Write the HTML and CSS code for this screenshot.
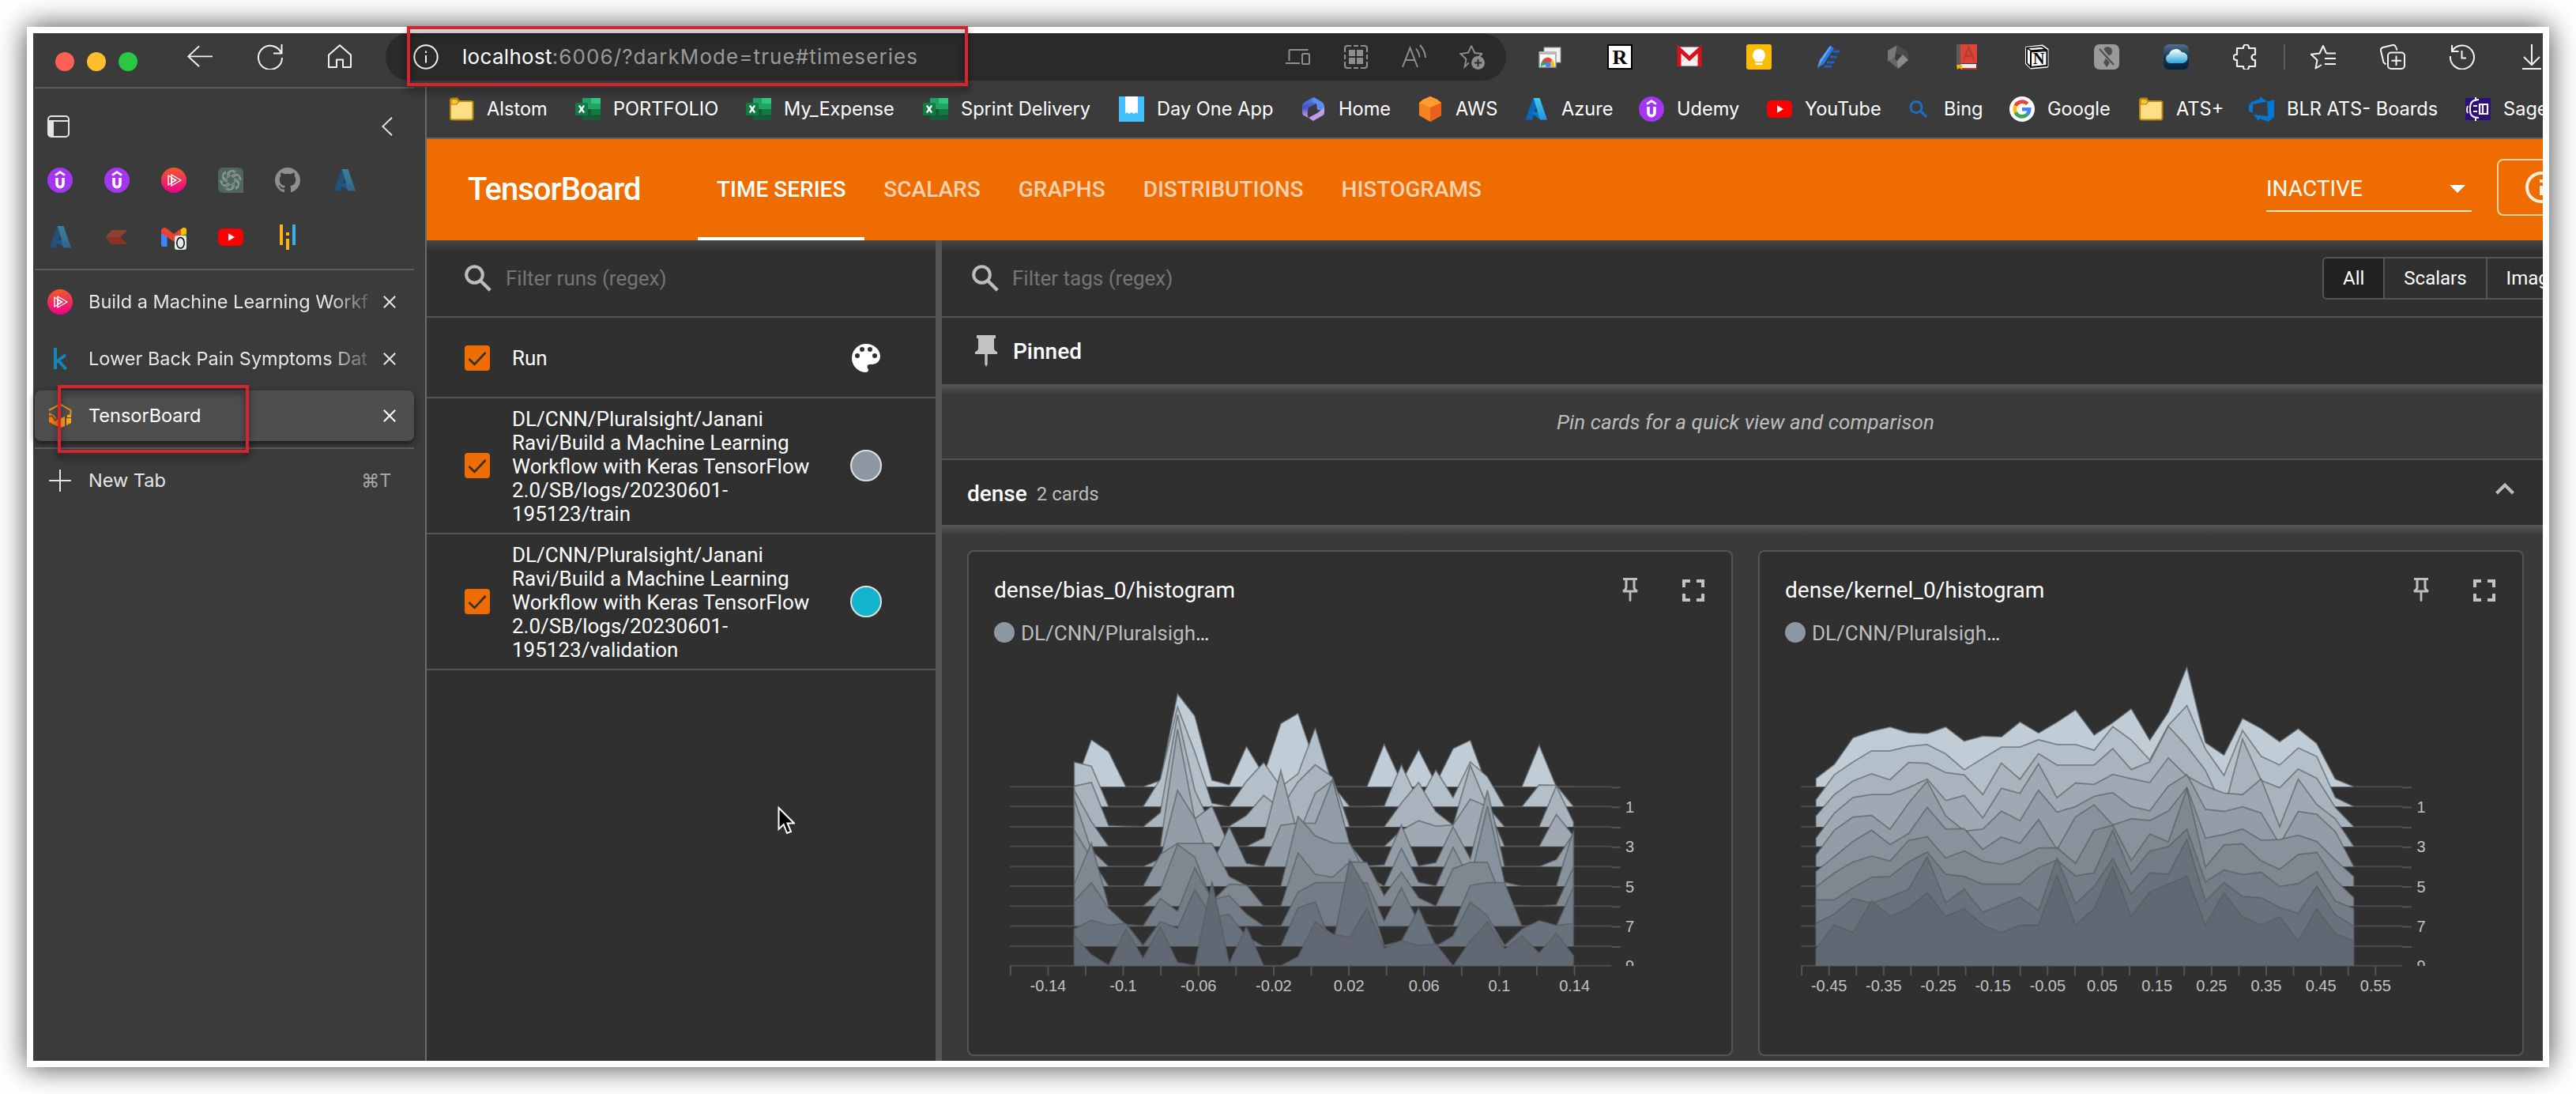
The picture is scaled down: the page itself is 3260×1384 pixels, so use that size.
FILE: index.html
```html
<!DOCTYPE html>
<html lang="en">
<head>
<meta charset="utf-8">
<title>TensorBoard</title>
<link rel="stylesheet" href="styles.css">
</head>
<body>
<svg class="defs" width="0" height="0" aria-hidden="true">
  <defs>
    <linearGradient id="ps" x1="0" y1="0" x2="0" y2="1"><stop offset="0" stop-color="#f15b2a"/><stop offset="1" stop-color="#ec008c"/></linearGradient>
    <linearGradient id="azL" x1="0" y1="0" x2="0" y2="1"><stop offset="0" stop-color="#1562ab"/><stop offset="1" stop-color="#0669bc"/></linearGradient>
    <linearGradient id="azR" x1="0" y1="0" x2="0" y2="1"><stop offset="0" stop-color="#3ccbf4"/><stop offset="1" stop-color="#2892df"/></linearGradient>
    <linearGradient id="cloud" x1="0" y1="0" x2="0" y2="1"><stop offset="0" stop-color="#fff"/><stop offset="1" stop-color="#2aa6dc"/></linearGradient>
    <linearGradient id="cloudbg" x1="0" y1="0" x2="0" y2="1"><stop offset="0" stop-color="#4f6f8d"/><stop offset=".5" stop-color="#17364f"/><stop offset="1" stop-color="#06203f"/></linearGradient>
    <linearGradient id="m365" x1="0" y1="0" x2="0" y2="1"><stop offset="0" stop-color="#3f8fe8"/><stop offset=".5" stop-color="#4a4fc4"/><stop offset="1" stop-color="#d3a6ee"/></linearGradient>
  </defs>
  <symbol id="udemy" viewBox="0 0 32 32"><circle cx="16" cy="16" r="16" fill="#a435f0"/><path d="M10 9.6 16 5.6l6 4" fill="none" stroke="#fff" stroke-width="2.6"/><path d="M12 13v7.5a4 4.2 0 0 0 8 0V13" fill="none" stroke="#fff" stroke-width="3.6"/></symbol>
  <symbol id="pluralsight" viewBox="0 0 32 32"><circle cx="16" cy="16" r="16" fill="url(#ps)"/><g fill="none" stroke="#fff" stroke-width="1.4" stroke-linejoin="round"><path d="M13 9 25 16 13 23z"/><path d="M9 10v12l10-6z"/><path d="M13 13v6l5-3z"/></g></symbol>
  <symbol id="azure" viewBox="0 0 32 32"><path d="M12 2h8L11 29.5H2.500z" fill="url(#azL)"/><path d="M8 19.500h13.500v10z" fill="#0078d4"/><path d="M12.800 2H20.500L30 29.500H20.800z" fill="url(#azR)"/></symbol>
  <symbol id="youtube" viewBox="0 0 32 32"><rect y="5" width="32" height="22" rx="6" fill="#f00"/><path d="M13 11.200v9.600l8-4.800z" fill="#fff"/></symbol>
  <symbol id="folder" viewBox="0 0 32 32"><path d="M2 5q0-2.500 2.500-2.500h6L13 6h15.500q2 0 2 2.200V27q0 2.500-2.500 2.500H4.500Q2 29.500 2 27z" fill="#ffdf85" stroke="#b8860b" stroke-width="2"/><path d="M3 4.500q0-1 1.500-1h5.500L12.500 6.500 10 10H3z" fill="#f7c52f" stroke="#b8860b" stroke-width="1.200"/></symbol>
  <symbol id="excel" viewBox="0 0 32 32"><path d="M9 2h23v28H9z" fill="#21a366"/><path d="M20 2h12v7H20z" fill="#33c481"/><path d="M9 16h23v7H9z" fill="#107c41"/><path d="M9 23h23v7H9z" fill="#185c37"/><path d="M9 16h11v7H9z" fill="#185c37"/><rect y="8" width="16" height="16" rx="1.500" fill="#107c41"/><path d="m4.800 11.500 6.400 9m0-9-6.400 9" stroke="#fff" stroke-width="2.200"/></symbol>
  <symbol id="close" viewBox="0 0 16 16"><path d="m.8.8 14.400 14.400M15.200.8.800 15.200" fill="none" stroke="currentColor" stroke-width="2"/></symbol>
  <symbol id="search" viewBox="0 0 34 34"><circle cx="12.500" cy="12.500" r="10.300" fill="none" stroke="#bdbdbd" stroke-width="4"/><path d="m20 20 12.300 12.300" stroke="#bdbdbd" stroke-width="4.300"/></symbol>
  <symbol id="pin" viewBox="0 0 24 32"><path d="M3 1.500h18M7 2v10q0 3-4 5h18q-4-2-4-5V2" fill="none" stroke="#bdbdbd" stroke-width="3"/><path d="M12 18v10.500" stroke="#bdbdbd" stroke-width="2.800" stroke-linecap="round"/></symbol>
  <symbol id="fullscreen" viewBox="0 0 28 28"><path d="M2 10V2h8M18 2h8v8M26 18v8h-8M10 26H2v-8" fill="none" stroke="#c2c2c2" stroke-width="4"/></symbol>
  <symbol id="check" viewBox="0 0 32 32"><rect width="32" height="32" rx="4" fill="#ef6c00"/><path d="m5.500 17 7 7L26.500 9" fill="none" stroke="#303030" stroke-width="2.600"/></symbol>
</svg>

<div class="window">
  <header class="toolbar">
    <div class="lights"><i class="red"></i><i class="yellow"></i><i class="green"></i></div>
    <div class="nav">
      <svg viewBox="0 0 32 32"><path d="M32 16H1.500M15 1.500 1.200 16 15 30" transform="translate(0 1) scale(1 .9)"/></svg>
      <svg viewBox="0 0 32 32"><path d="M30 11.500A15 15 0 1 0 31 17M30.500 0v11.500H20"/></svg>
      <svg viewBox="0 0 32 32"><path d="M2 13.500 16 1.200l14 12.300V29H20V19.500h-8V29H2z" stroke-linejoin="round"/></svg>
    </div>
    <div class="omnibox">
      <svg class="info" viewBox="0 0 32 32"><circle cx="16" cy="16" r="14.700"/><path d="M16 14v9.500M16 8.500v2.500"/></svg>
      <span class="url"><b>localhost</b>:6006/?darkMode=true#timeseries</span>
      <div class="omni-actions">
        <svg viewBox="0 0 32 32"><path d="M4.500 21V8.500Q4.500 7 6 7h22.500M0 24h18"/><rect x="21" y="12" width="9" height="13" rx="1.500"/></svg>
        <svg viewBox="0 0 32 32"><path d="M2 10V5q0-3 3-3h5M22 2h5q3 0 3 3v5M30 22v5q0 3-3 3h-5M10 30H5q-3 0-3-3v-5M2 13v6M30 13v6M13 2h6M13 30h6"/><path class="solid" d="M7 7h8v8H7zM17 7h8v8h-8zM7 17h8v8H7zM17 17h8v8h-8z"/></svg>
        <svg viewBox="0 0 32 32"><path d="M1 29 10.500 4.500 20 29M4.500 20h12M18 5.500q4 5 4.500 11M23 1q6.500 7 7 16"/></svg>
        <svg class="star" viewBox="0 0 34 34"><path d="M16 2l4.500 9.700 10.500 1M12.500 25 7 30.500 9 20 1.500 12.700l10.300-1.300L16 2M30 13l-4 4"/><circle class="solid" cx="25" cy="25" r="9"/><path class="plus" d="M25 20v10M20 25h10"/></svg>
      </div>
    </div>
    <div class="extensions">
      <svg viewBox="0 0 32 32"><rect x="8" y="4" width="21" height="19" fill="#f1f1f1" stroke="#9a9a9a"/><rect x="2" y="10" width="21" height="19" fill="#fff" stroke="#9a9a9a" stroke-width="1.500"/><rect x="2" y="9" width="21" height="4" fill="#bbb"/><path d="M4 28a8.500 9.500 0 0 1 4-9l5 6z" fill="#34a853"/><path d="M6 20q7-7 13 0l-3 4H9z" fill="#ea4335"/><path d="M18 19q4 4 3 9h-7z" fill="#fbbc05"/><circle cx="13" cy="25.500" r="3.600" fill="#4285f4"/></svg>
      <svg viewBox="0 0 32 32"><rect x="1" y="1" width="30" height="30" fill="#fff" stroke="#000" stroke-width="2"/><text x="16" y="25" text-anchor="middle" font-family="Liberation Serif, serif" font-weight="700" font-size="26">R</text></svg>
      <svg viewBox="0 0 32 32"><rect x="1" y="3.500" width="30" height="24" fill="#f3f3f3"/><path d="m2 26 11-11M30 26 19 15" stroke="#ddd" stroke-width="2"/><path d="M3 28V6l13 12L29 6v22" fill="none" stroke="#d8121c" stroke-width="5"/></svg>
      <svg viewBox="0 0 32 32"><rect width="32" height="32" rx="3" fill="#fbbc04"/><path d="M16 6a8 8 0 0 0-5 14.200V22h10v-1.800A8 8 0 0 0 16 6zM11.500 23.500h9V26h-9z" fill="#fff"/></svg>
      <svg viewBox="0 0 32 32"><path d="m2 30 3-10L18 2l5 3L10 25z" fill="#2d7be0"/><path d="m2 30 3-10L18 2l2 1z" fill="#5aa5f5"/><path d="M21 9h9M18 16h9M14 23h10M11 28h9" stroke="#1f5fc4" stroke-width="3"/></svg>
      <svg viewBox="0 0 32 32"><path d="M15 1 3 8v14l9-5z" fill="#777"/><path d="m15 1 14 9v12l-8-8-7-2z" fill="#4b4b4b"/><path d="M29 20 16 31l-2-9 8-9z" fill="#8a8a8a"/><path d="m3 20 13 11-3-13z" fill="#666"/></svg>
      <svg viewBox="0 0 32 32"><path d="M2 0h26v24H2z" fill="#db4437"/><path d="M2 0h5v28H2z" fill="#5c5c5c"/><path d="M7 25h20v5H7z" fill="#eee"/><path d="M7 30h21v2H7z" fill="#c23321"/><path d="M2 26h7v6l-3-2-3 2z" fill="#f4b400"/><path d="m11 20 6.500-16L24 20M13 15h9" fill="none" stroke="#b93b2e" stroke-width="2.500"/></svg>
      <svg viewBox="0 0 32 32"><path d="M1 3 23 .5 30.500 6v21q0 2.500-2.500 2.700L8 31.500 1 25z" fill="#fff"/><path d="M3 4.500 22 3l5 3.500L8 8z" fill="none" stroke="#000" stroke-width="1.600"/><path d="M8 9.500 28.500 8v19L8 29z" fill="#fff" stroke="#000" stroke-width="2"/><path d="M3 5v19l4 4" fill="none" stroke="#000" stroke-width="1.800"/><text x="18.300" y="25" text-anchor="middle" font-family="Liberation Serif, serif" font-weight="700" font-size="20">N</text></svg>
      <svg viewBox="0 0 32 32"><rect width="32" height="32" rx="7" fill="#9a9a9a"/><path d="M12 8a5.500 5.500 0 1 1 7 6l2 8-5 7-4-6 3-5z" fill="#4d4d4d"/><path d="M7 4 26 27" stroke="#9a9a9a" stroke-width="5"/><path d="M7 6 25 26" stroke="#4d4d4d" stroke-width="2"/></svg>
      <svg viewBox="0 0 32 32"><rect width="32" height="32" rx="7" fill="url(#cloudbg)"/><path d="M8 24a6 6 0 0 1-1-11.500A9 9 0 0 1 23 10a7 7 0 0 1 1 14z" fill="url(#cloud)"/></svg>
      <svg class="line" viewBox="0 0 32 32"><path d="M5 5h8V4a3.500 3.500 0 0 1 7 0v1h8v8h-1a3.200 3.200 0 0 0 0 7h1v8h-8v1a3.500 3.500 0 0 1-7 0v-1H5v-8H4a3.500 3.500 0 0 1 0-7h1z" stroke-linejoin="round"/></svg>
    </div>
    <span class="toolbar-sep"></span>
    <div class="browser-actions">
      <svg viewBox="0 0 32 32"><path d="M20 11.500 16 2l-4.500 9.500L.8 12.800 8.500 20 6.500 30.500 14 26M20 11.500h12M18 18h14M18 25h14" stroke-linejoin="round"/></svg>
      <svg viewBox="0 0 32 32"><rect x="10" y="10.500" width="21" height="20.500" rx="4"/><path d="M20.500 14.500v12.500M14.500 20.700h12.500M7.500 25.500 4.500 23 1 8q-.5-3 2.500-4L16 1q3-.500 4 2.500l1.500 4" /></svg>
      <svg viewBox="0 0 32 32"><path d="M3.500 8A15 15 0 1 1 1 15M3 1v8h8.500M15.500 8v9.500H21"/></svg>
      <svg viewBox="0 0 32 32"><path d="M16 0v25M6 16l10 10 10-10M4 31h24"/></svg>
    </div>
  </header>

  <div class="body">
    <aside class="sidebar">
      <div class="rule"></div>
      <div class="side-head">
        <svg class="panel" viewBox="0 0 28 28"><rect x="1" y="1" width="26" height="26" rx="4" fill="none" stroke="#e4e4e4" stroke-width="2"/><path d="M1 7h26" stroke="#e4e4e4" stroke-width="2"/><path d="M1 7h7v20H4q-3 0-3-3z" fill="#e4e4e4"/></svg>
        <svg class="chev" viewBox="0 0 14 24"><path d="M13 .8 1.300 12 13 23.200" fill="none" stroke="#e4e4e4" stroke-width="1.900"/></svg>
      </div>
      <div class="pinned-tabs">
        <svg><use href="#udemy"/></svg>
        <svg><use href="#udemy"/></svg>
        <svg><use href="#pluralsight"/></svg>
        <svg viewBox="0 0 32 32"><path d="M7 0h18q7 0 7 7v25H7q-7 0-7-7V7q0-7 7-7z" fill="#50665f"/><g fill="none" stroke="#8b9893" stroke-width="1.500"><g id="petal"><path d="M14 12.500V8.500a4.800 4.800 0 0 1 8.500-3M16 11.200l4-2.300a4.800 4.800 0 0 1 6.500 6.500"/></g><use href="#petal" transform="rotate(60 16 16)"/><use href="#petal" transform="rotate(120 16 16)"/><use href="#petal" transform="rotate(180 16 16)"/><use href="#petal" transform="rotate(240 16 16)"/><use href="#petal" transform="rotate(300 16 16)"/></g></svg>
        <svg viewBox="0 0 16 16"><path fill="#8f8f8f" d="M8 0C3.580 0 0 3.580 0 8c0 3.540 2.290 6.530 5.470 7.590.4.070.55-.17.55-.38 0-.19-.01-.82-.01-1.490-2.010.37-2.530-.49-2.690-.94-.09-.23-.48-.94-.82-1.130-.28-.15-.68-.52-.01-.53.63-.01 1.080.58 1.230.82.72 1.210 1.870.87 2.330.66.07-.52.28-.87.51-1.070-1.780-.2-3.640-.89-3.640-3.950 0-.87.31-1.590.82-2.150-.08-.2-.36-1.020.08-2.120 0 0 .67-.21 2.200.82.64-.18 1.320-.27 2-.27s1.360.09 2 .27c1.530-1.040 2.200-.82 2.200-.82.44 1.100.16 1.920.08 2.120.51.56.82 1.270.82 2.150 0 3.070-1.870 3.750-3.650 3.950.29.25.54.73.54 1.480 0 1.070-.01 1.930-.01 2.200 0 .21.15.46.55.38A8.010 8.010 0 0 0 16 8c0-4.420-3.580-8-8-8z"/></svg>
        <svg class="dim"><use href="#azure"/></svg>
        <svg class="dim"><use href="#azure"/></svg>
        <svg viewBox="0 0 32 32"><path d="M2 16 9 7h20.500L20 16l9 9H9z" fill="#8c4230"/><path d="M2 16h18l9 9H9z" fill="#8a3228"/></svg>
        <svg viewBox="0 0 32 32"><path d="M0 8v18q0 2 2 2h5.500V12z" fill="#4285f4"/><path d="M24.500 12 32 8v10h-7.500z" fill="#34a853"/><path d="M24.500 14V6.500q4-5 7.500-1V12z" fill="#fbbc04"/><path d="M0 11V7Q2 2 7 5l9 7 8.500-6.500V15L16 21.500z" fill="#ea4335"/><rect x="17" y="14" width="15" height="18" rx="3" fill="#e3ebe4"/><ellipse cx="24.500" cy="23.300" rx="4.700" ry="6.800" fill="none" stroke="#000" stroke-width="1.500"/></svg>
        <svg><use href="#youtube"/></svg>
        <svg viewBox="0 0 32 32"><path d="M6 0h4v26H6zM14 10h4v4h-4zM14 18h4v14h-4z" fill="#fdb515"/><path d="M22 0h4v26h-4z" fill="#3eaee6"/></svg>
      </div>
      <div class="rule"></div>
      <div class="tabs">
        <div class="tab"><svg class="fav"><use href="#pluralsight"/></svg><span class="tab-title fade">Build a Machine Learning Workf</span><svg class="x"><use href="#close"/></svg></div>
        <div class="tab"><svg class="fav" viewBox="0 0 32 32"><path d="M10 2v27M11 20 23 11M14 18l9.500 11" fill="none" stroke="#1487b8" stroke-width="4"/></svg><span class="tab-title fade">Lower Back Pain Symptoms Dat</span><svg class="x"><use href="#close"/></svg></div>
        <div class="tab active"><svg class="fav" viewBox="0 0 32 32"><path d="M2 9 16 1.500 29.500 9v5" fill="none" stroke="#e8901f" stroke-width="2"/><path d="M2 12l6 3 4 5 4-2v13L2 24z" fill="#f57c00"/><path d="M2 17l4-1 4 6 6-7" fill="none" stroke="#4e4e4e" stroke-width="1.800"/><path d="M17 19l5-2v12l-5 2zM24 19h6v6l-6 3zM25 15l5-1v4h-5z" fill="#ffa21a"/></svg><span class="tab-title">TensorBoard</span><svg class="x"><use href="#close"/></svg></div>
      </div>
      <div class="rule"></div>
      <div class="new-tab"><svg viewBox="0 0 28 28"><path d="M14 0v28M0 14h28" stroke="#e4e4e4" stroke-width="2"/></svg><span>New Tab</span><kbd>⌘T</kbd></div>
    </aside>

    <section class="content">
      <nav class="bookmarks">
        <a class="w1"><svg><use href="#folder"/></svg>Alstom</a>
        <a class="w2"><svg><use href="#excel"/></svg>PORTFOLIO</a>
        <a class="w3"><svg><use href="#excel"/></svg>My_Expense</a>
        <a class="w4"><svg><use href="#excel"/></svg>Sprint Delivery</a>
        <a class="w5"><svg viewBox="0 0 32 32"><path d="M0 0h32v32H0z" fill="#44c0ff"/><path d="M8 0h16v22l-2-2-3 2-3-2-3 2-3-2-2 2z" fill="#fff"/></svg>Day One App</a>
        <a class="w6"><svg viewBox="0 0 32 32"><path d="M16 1 4 8q-2 1-2 4v8q0 3 2 4l6 3q-2-2-1-8 0-4 3-6l8-4z" fill="url(#m365)"/><path d="M17 1l10 6q3 2 3 5v6l-9-1-1-8-6-2z" fill="#5b8df0"/><path d="M30 14v6q0 3-2 4L16 31l-6-4 11-6z" fill="#c39be8"/></svg>Home</a>
        <a class="w7"><svg viewBox="0 0 32 32"><path d="m16 0 9 4 5 4v16l-14 8-14-8V8l5-4z" fill="#f58220"/><path d="m16 0 9 4 5 4-14 6L2 8l5-4z" fill="#ff9d2e"/><path d="M16 14 30 8v16l-14 8z" fill="#e8621e"/></svg>AWS</a>
        <a class="w8"><svg><use href="#azure"/></svg>Azure</a>
        <a class="w9"><svg><use href="#udemy"/></svg>Udemy</a>
        <a class="w10"><svg><use href="#youtube"/></svg>YouTube</a>
        <a class="w11"><svg viewBox="0 0 32 32"><circle cx="13" cy="13.500" r="7" fill="none" stroke="#1b6ec2" stroke-width="3"/><path d="m18 18 8 8" stroke="#1b6ec2" stroke-width="3.200"/></svg>Bing</a>
        <a class="w12"><svg viewBox="0 0 32 32"><circle cx="16" cy="16" r="16" fill="#fff"/><g fill="none" stroke-width="4.600"><path d="M7.700 11.800A9.300 9.300 0 0 1 22.700 9.500" stroke="#ea4335"/><path d="M7.700 20.200a9.300 9.300 0 0 1 0-8.400" stroke="#fbbc05"/><path d="M22 23.200A9.300 9.300 0 0 1 7.700 20.200" stroke="#34a853"/><path d="M16 16.300h9.200q0 4-3.200 6.900" stroke="#4285f4"/></g></svg>Google</a>
        <a class="w13"><svg><use href="#folder"/></svg>ATS+</a>
        <a class="w14"><svg viewBox="0 0 32 32"><path d="M0 11 3.500 7 14 3V0l9 6.500L5 10v11l-5-2z" fill="#0078d4"/><path d="M23 6.500 32 4v22l-7 6-12-4v4l-7-9 18 2z" fill="#0078d4"/></svg>BLR ATS- Boards</a>
        <a class="w15"><svg viewBox="0 0 32 32"><path d="M0 2h32v28H0z" fill="#2d1080"/><path d="M17 4Q6 4 6 14v4q0 9 11 9M13 1v5M13 26v5M3 12q-2 5 0 9M10 12h5M10 19h5" fill="none" stroke="#fff" stroke-width="2"/><path d="M18 10h10v12H18zM22 10v12" fill="none" stroke="#fff" stroke-width="2.200"/></svg>Sage</a>
      </nav>

      <header class="tb-header">
        <h1>TensorBoard</h1>
        <nav class="tb-tabs"><a class="on">TIME SERIES</a><a>SCALARS</a><a>GRAPHS</a><a>DISTRIBUTIONS</a><a>HISTOGRAMS</a></nav>
        <div class="tb-select">INACTIVE<i></i></div>
        <div class="tb-info"><svg viewBox="0 0 40 40"><circle cx="20" cy="20" r="18" fill="none" stroke="#ffeedd" stroke-width="4"/><path d="M20 18v12M20 10v4" stroke="#ffeedd" stroke-width="4"/></svg></div>
      </header>

      <div class="tb-body">
        <div class="runs">
          <div class="filter"><svg><use href="#search"/></svg><span>Filter runs (regex)</span></div>
          <div class="run head"><svg class="cb"><use href="#check"/></svg><span>Run</span>
            <svg class="palette" viewBox="0 0 36 36"><path fill="#fff" fill-rule="evenodd" d="M18 0a18 18 0 0 0 0 36 3 3 0 0 0 2.200-5 3 3 0 0 1 2.200-5H26a10 10 0 0 0 10-10C36 7 28 0 18 0zM7 18a3 3 0 1 1 0-6 3 3 0 0 1 0 6zm6-8a3 3 0 1 1 0-6 3 3 0 0 1 0 6zm10 0a3 3 0 1 1 0-6 3 3 0 0 1 0 6zm6 8a3 3 0 1 1 0-6 3 3 0 0 1 0 6z"/></svg></div>
          <div class="run"><svg class="cb"><use href="#check"/></svg><p>DL/CNN/Pluralsight/Janani Ravi/Build a Machine Learning Workflow with Keras TensorFlow 2.0/SB/logs/20230601-195123/train</p><i class="dot train"></i></div>
          <div class="run"><svg class="cb"><use href="#check"/></svg><p>DL/CNN/Pluralsight/Janani Ravi/Build a Machine Learning Workflow with Keras TensorFlow 2.0/SB/logs/20230601-195123/validation</p><i class="dot valid"></i></div>
        </div>
        <div class="splitter"></div>
        <main class="main">
          <div class="filter tags"><svg><use href="#search"/></svg><span>Filter tags (regex)</span>
            <div class="toggle"><b class="on">All</b><b>Scalars</b><b>Image</b></div></div>
          <div class="group-head pinned"><svg viewBox="0 0 28 40"><path d="M2 0h24v4h-2v12q0 4 4 5v3H0v-3q4-1 4-5V4H2zM12.300 24h3.400v13l-1.700 3-1.700-3z" fill="#c2c2c2"/></svg><h2>Pinned</h2></div>
          <div class="pin-hint">Pin cards for a quick view and comparison</div>
          <div class="group-head dense"><h2>dense</h2><span>2 cards</span><svg viewBox="0 0 24 16"><path d="M1.500 14 12 3.500 22.500 14" fill="none" stroke="#bdbdbd" stroke-width="4"/></svg></div>
          <div class="cards">
            <article class="card">
              <div class="card-head"><h3>dense/bias_0/histogram</h3><svg class="cpin"><use href="#pin"/></svg><svg class="cfull"><use href="#fullscreen"/></svg></div>
              <div class="legend"><i></i><span>DL/CNN/Pluralsigh<em>…</em></span></div>
              <svg class="plot" id="bias" viewBox="1226 822 965 512"></svg>
            </article>
            <article class="card">
              <div class="card-head"><h3>dense/kernel_0/histogram</h3><svg class="cpin"><use href="#pin"/></svg><svg class="cfull"><use href="#fullscreen"/></svg></div>
              <div class="legend"><i></i><span>DL/CNN/Pluralsigh<em>…</em></span></div>
              <svg class="plot" id="kernel" viewBox="2227 822 965 512"></svg>
            </article>
          </div>
        </main>
      </div>
    </section>
  </div>
</div>

<div class="mark mark-url"></div>
<div class="mark mark-tab"></div>
<svg class="cursor" viewBox="0 0 22 36"><path d="M1.500 2v27l6.200-6 4.300 11 5-2-4.500-10.500H21z" fill="#000" stroke="#fff" stroke-width="2"/></svg>
<script src="charts.js"></script>
</body>
</html>
```
FILE: styles.css
```css
* { box-sizing: border-box; }
body { margin: 0; width: 3260px; height: 1384px; overflow: hidden; background: #fff; position: relative; font-family: Roboto, sans-serif; color: #fff; padding: 34px; }
.defs { position: absolute; }
h1, h2, h3, p { margin: 0; }
svg { flex: none; display: block; }

.window { width: 3192px; height: 1316px; border: 8px solid #fff; background: #3b3b3b; box-shadow: 0 0 34px rgba(0, 0, 0, .74); display: flex; flex-direction: column; }

/* browser toolbar */
.toolbar { height: 68px; flex: none; display: flex; align-items: flex-start; overflow: hidden; }
.toolbar > * { flex: none; }
.toolbar svg { width: 32px; height: 32px; }
.lights { display: flex; gap: 16px; margin: 24px 0 0 28px; width: 167px; }
.lights i { width: 24px; height: 24px; border-radius: 50%; }
.red { background: #fe5f57; }
.yellow { background: #febc2e; }
.green { background: #28c840; }
.nav { display: flex; gap: 56.500px; margin-top: 14px; width: 251px; }
.nav svg, .browser-actions svg, .extensions .line, .info { fill: none; stroke: #f2f2f2; stroke-width: 2; }
.omnibox { width: 1418px; height: 60px; border-radius: 30px; background: #2a2a2a; display: flex; align-items: center; padding: 0 27px 0 35px; }
.url { font: 26px/40px Inter, sans-serif; color: #9a9a9a; margin-left: 30px; letter-spacing: 1.080px; white-space: nowrap; }
.url b { font-weight: 400; color: #fff; letter-spacing: .3px; }
.omni-actions { margin-left: auto; display: flex; gap: 41.500px; fill: none; stroke: #8e8e8e; stroke-width: 2; }
.omni-actions .solid { fill: #8e8e8e; stroke: none; }
.omni-actions .plus { stroke: #2a2a2a; }
.omni-actions svg:nth-child(2) { stroke-width: 2.200; }
.extensions { display: flex; gap: 56px; margin: 14px 0 0 40px; }
.extensions .line { stroke-width: 2.200; }
.toolbar-sep { width: 2px; height: 32px; background: #5c5c5c; margin: 14px 32px 0; }
.browser-actions { display: flex; gap: 56px; margin-top: 14px; }

.body { flex: 1; display: flex; min-height: 0; }

/* vertical tab strip */
.sidebar { width: 498px; flex: none; border-right: 2px solid #6b6b6b; font: 23.500px/64px Inter, sans-serif; color: #e6e6e6; }
.rule { height: 2px; background: #5d5d5d; margin: 0 14px 0 2px; }
.side-head { height: 80px; padding: 16px 41px 0 18px; display: flex; align-items: center; justify-content: space-between; }
.panel { width: 28px; height: 28px; }
.chev { width: 14px; height: 24px; }
.pinned-tabs { display: grid; grid-template-columns: repeat(6, 32px); grid-auto-rows: 72px; column-gap: 40px; padding-left: 18px; height: 148px; align-items: center; }
.pinned-tabs svg { width: 32px; height: 32px; overflow: visible; }
.dim { opacity: .5; }
.tabs { display: flex; flex-direction: column; gap: 8px; padding: 8px 14px 8px 2px; }
.tab { height: 64px; display: flex; align-items: center; padding: 0 23px 0 16px; border-radius: 8px; }
.tab.active { background: #4e4e4e; color: #fff; box-shadow: 0 3px 8px rgba(0, 0, 0, .55); }
.fav { width: 32px; height: 32px; margin-right: 20px; }
.tab-title { white-space: nowrap; }
.fade { -webkit-mask-image: linear-gradient(90deg, #000 86%, transparent 104%); mask-image: linear-gradient(90deg, #000 86%, transparent 104%); }
.x { width: 16px; height: 16px; margin-left: auto; }
.new-tab { display: flex; align-items: center; height: 80px; padding: 0 43px 0 20px; }
.new-tab svg { width: 28px; height: 28px; margin-right: 22px; }
.new-tab kbd { margin-left: auto; font: inherit; font-size: 23px; color: #a8a8a8; }

/* bookmarks */
.content { width: 2678px; flex: none; display: flex; flex-direction: column; overflow: hidden; }
.bookmarks { height: 66px; border-bottom: 2px solid #666; display: flex; align-items: center; padding: 0 0 8px 28px; font: 23.600px/32px Inter, sans-serif; overflow: hidden; }
.bookmarks a { display: flex; align-items: center; gap: 16px; flex: none; white-space: nowrap; }
.bookmarks svg { width: 32px; height: 32px; }
.w1 { width: 160px; } .w2 { width: 216px; } .w3 { width: 224px; } .w4 { width: 248px; } .w5 { width: 230px; }
.w6 { width: 148px; } .w7 { width: 134px; } .w8 { width: 146px; } .w9 { width: 162px; } .w10 { width: 176px; }
.w11 { width: 131px; } .w12 { width: 163px; } .w13 { width: 140px; } .w14 { width: 274px; } .w15 { width: 160px; }

/* TensorBoard header */
.tb-header { height: 128px; flex: none; background: #ef6c00; display: flex; align-items: center; }
.tb-header h1 { width: 343px; padding-left: 52px; font-size: 40px; line-height: 48px; font-weight: 500; letter-spacing: -1px; }
.tb-tabs { display: flex; height: 128px; font-size: 28px; font-weight: 500; letter-spacing: 0; }
.tb-tabs a { padding: 0 24px; line-height: 127px; color: rgba(255, 255, 255, .7); }
.tb-tabs .on { color: #fff; box-shadow: inset 0 -4px #fff; }
.tb-select { margin-left: auto; width: 260px; height: 56px; border-bottom: 2px solid #ffe9d0; font-size: 28px; line-height: 56px; display: flex; justify-content: space-between; align-items: center; padding-right: 8px; color: #fffdf5; }
.tb-select i { border: 10px solid transparent; border-top-color: #fff; border-bottom: 0; }
.tb-info { width: 112px; height: 72px; margin: 0 -54px 6px 32px; border: 2px solid #ffd3a8; border-radius: 8px; display: grid; place-items: center; flex: none; }
.tb-info svg { width: 40px; height: 40px; }

.tb-body { flex: 1; display: flex; min-height: 0; }

/* runs list */
.runs { width: 644px; flex: none; background: #303030; font-size: 26px; }
.filter { height: 98px; border-bottom: 2px solid #555; display: flex; align-items: center; padding: 0 0 1px 48px; font-size: 26px; color: #757575; background: linear-gradient(#464646, #303030 14px); }
.filter > svg { width: 34px; height: 34px; margin-right: 18px; }
.run { height: 172px; border-bottom: 2px solid #555; display: flex; align-items: center; padding: 0 68px 0 48px; line-height: 30px; }
.run.head { height: 102px; padding-top: 2px; }
.cb { width: 32px; height: 32px; margin-right: 28px; }
.run p { width: 400px; padding-top: 1px; }
.palette { width: 36px; height: 36px; margin: 0 2px 0 auto; }
.dot { width: 40px; height: 40px; border-radius: 50%; border: 2px solid #e0e0e0; margin-left: auto; }
.train { background: #8e98a3; }
.valid { background: #12b5cb; }
.splitter { width: 8px; flex: none; background: #555; }

/* cards pane */
.main { width: 2034px; flex: none; background: #3a3a3a; }
.tags { padding-left: 38px; background: linear-gradient(#464646, #303030 14px); }
.tags > svg { margin-right: 17px; }
.toggle { margin-left: auto; display: flex; border: 2px solid #555; border-radius: 6px; height: 54px; font-size: 24px; line-height: 50px; color: #fff; width: 288px; overflow: hidden; margin-right: -1px; }
.toggle b { font-weight: 400; padding: 0 24px; border-right: 2px solid #555; }
.toggle .on { background: #212121; }
.group-head { background: #303030; border-bottom: 2px solid #555; display: flex; align-items: center; }
.group-head h2 { font-size: 28px; font-weight: 500; }
.pinned { height: 86px; padding-left: 42px; }
.pinned svg { width: 28px; height: 40px; margin-right: 20px; }
.pin-hint { height: 94px; border-bottom: 2px solid #555; font-size: 26px; letter-spacing: .07px; font-style: italic; line-height: 92px; text-align: center; color: #bdbdbd; background: linear-gradient(#555, #3a3a3a 11px); }
.dense { height: 84px; padding: 2px 44px 0 32px; }
.dense span { font-size: 24px; color: #bdbdbd; margin-left: 12px; padding-top: 2px; }
.dense svg { width: 24px; height: 16px; margin: -12px 0 0 auto; }
.cards { display: grid; grid-template-columns: 969px 969px; gap: 32px; padding: 30px 32px; background: linear-gradient(#555, #3a3a3a 11px); }
.card { height: 640px; background: #303030; border: 2px solid #555; border-radius: 8px; }
.card-head { display: flex; align-items: center; height: 56px; margin-top: 20px; padding: 2px 34px 0 32px; }
.card-head h3 { font-size: 28px; font-weight: 400; line-height: 54px; margin-right: auto; }
.cpin { width: 24px; height: 32px; margin-right: 54px; }
.cfull { width: 28px; height: 28px; }
.legend { display: flex; align-items: center; height: 48px; padding: 3px 0 0 32px; font-size: 26px; color: #bdbdbd; }
.legend i { width: 26px; height: 26px; border-radius: 50%; background: #8e98a3; margin-right: 8px; }
.legend span { padding-top: 2px; }
.legend em { font-style: normal; color: #fff; }
.plot { width: 965px; height: 512px; }
.plot text { font: 20px "Liberation Sans", Arial, sans-serif; fill: #c2c2c2; }
.plot .grid, .plot .tick { stroke: #555; stroke-width: 2; fill: none; }
.plot .grid { stroke: #4a4a4a; }
.plot .ridge { stroke: rgba(85, 88, 92, .62); stroke-width: 1.800; }

/* annotations over the page */
.mark { position: absolute; border: 4px solid #d8232f; filter: drop-shadow(0 6px 4px rgba(0, 0, 0, .55)); }
.mark-url { left: 515px; top: 33px; width: 710px; height: 76px; }
.mark-tab { left: 73px; top: 487px; width: 242px; height: 86px; }
.cursor { position: absolute; left: 984px; top: 1019px; width: 22px; height: 38px; }
```
FILE: charts.js
```js
// Offset histograms: one ridge per step, heights kept in the plot's own units.
const COLORS = ['#c0ccd6', '#b3bfc9', '#a8b3bd', '#a0a8b3', '#929da8', '#87929c', '#7f8791', '#727d87', '#67727d', '#626873'];
const BASE = [487, 557, 628, 697, 768, 837, 907, 977, 1048, 1117];
const SY = 564 / 1568;

const bias = {
  id: 'bias', ox: 1200, sx: 1000 / 1568, first: 250, step: 34.17,
  grid: [122, 1316, 1334], tick0: 123.5, tickStep: 74.62, ticks: 16, labelX: 2057,
  labels: ['-0.14', '-0.1', '-0.06', '-0.02', '0.02', '0.06', '0.1', '0.14'],
  rows: [
    [487,322,364,487,487,465,160,238,464,480,345,445,265,229,405,487,487,487,337,470,357,475,353,324,487,487,487,340,487,487],
    [400,415,557,557,557,460,207,365,545,557,468,402,488,442,280,480,557,557,555,410,540,428,525,400,452,557,557,481,482,557],
    [485,472,624,626,628,578,235,500,628,626,588,518,565,470,410,453,628,628,628,545,472,575,622,412,557,628,628,628,485,612],
    [500,610,697,697,697,697,285,600,555,697,697,667,430,660,510,465,697,697,697,640,607,626,622,531,557,697,697,697,585,660],
    [530,710,768,768,768,740,500,598,760,628,757,767,623,615,616,462,690,766,762,622,766,754,628,740,500,768,768,768,743,652],
    [640,740,837,837,837,725,686,686,686,803,835,837,837,592,660,685,686,800,837,704,823,836,700,815,555,823,837,837,837,640],
    [830,685,907,907,907,850,690,735,890,830,833,907,907,720,795,806,752,753,870,788,878,907,775,753,753,905,905,907,902,770],
    [890,825,915,972,977,880,925,773,885,870,935,977,977,858,825,825,825,825,960,843,965,977,975,834,825,825,977,977,977,840],
    [987,957,975,968,1045,962,985,850,945,937,1015,1048,1048,913,892,1060,745,850,1045,1030,915,1048,1012,892,942,1045,988,958,975,968],
    [1010,1078,1115,988,1090,980,1105,1116,820,1108,980,1117,1117,1085,962,1005,1018,915,1055,1028,1046,1040,1117,1030,962,1058,1012,1072,1002,1082]
  ]
};

const kernel = {
  id: 'kernel', ox: 2200, sx: 1060 / 1568, first: 145, step: 34.73,
  grid: [117, 1243, 1260], tick0: 118.5, tickStep: 51.15, ticks: 22, labelX: 3058.5,
  labels: ['-0.45', '-0.35', '-0.25', '-0.15', '-0.05', '0.05', '0.15', '0.25', '0.35', '0.45', '0.55'],
  rows: [
    [458,408,315,292,277,297,300,277,327,309,312,259,298,260,217,305,262,213,323,225,66,332,376,247,282,329,283,335,460,487],
    [533,445,400,361,361,345,339,372,428,388,348,348,322,339,339,359,276,323,393,272,202,355,448,289,380,411,351,381,525,557],
    [590,515,467,442,463,402,405,438,446,515,404,461,371,411,411,411,353,427,400,275,345,430,570,320,465,491,425,458,560,628],
    [668,580,525,515,515,490,460,536,518,597,493,511,407,526,474,479,444,459,473,386,450,485,510,515,460,628,461,550,600,697],
    [727,640,594,588,637,545,468,590,643,636,573,607,500,577,557,521,508,557,572,485,445,567,574,558,580,690,574,584,645,768],
    [785,733,680,640,691,652,560,636,635,708,664,686,603,708,593,551,622,600,606,573,490,668,655,636,675,673,658,680,745,803],
    [840,790,752,731,749,676,663,738,713,749,760,735,703,702,757,640,623,747,654,681,495,770,692,688,748,778,726,718,815,877],
    [885,885,842,806,803,752,717,795,803,830,830,830,772,745,801,790,640,794,714,698,637,822,780,796,788,838,828,787,890,915],
    [968,935,880,897,875,848,733,895,847,929,903,875,923,738,899,838,740,865,790,795,673,890,825,873,878,912,933,838,938,977],
    [1057,974,1000,888,943,915,860,943,917,974,1001,974,974,800,973,916,770,945,858,830,802,974,860,945,973,945,1030,917,1003,1030]
  ]
};

function draw(c) {
  const X = v => (c.ox + v * c.sx).toFixed(1);
  const Y = v => (820 + v * SY).toFixed(1);
  const [g0, g1, g2] = c.grid;
  let out = '';
  BASE.forEach((b, r) => {
    out += `<path class="grid" d="M${X(g0)} ${Y(b)}H${X(g1)}"/>`;
    if (r < 9) out += `<path class="tick" d="M${X(g1)} ${Y(b + 3)}H${X(g2)}"/>`;
    const pts = c.rows[r].map((v, i) => `${X(c.first + i * c.step)} ${Y(Math.min(v, b))}`);
    out += `<path class="ridge" fill="${COLORS[r]}" d="M${X(c.first)} ${Y(b)}L${pts.join('L')}V${Y(b)}"/>`;
    if (r === 9) out += `<clipPath id="${c.id}-clip"><rect x="${X(g1)}" y="1190" width="80" height="31.8"/></clipPath>`;
    if (r % 2) out += `<text x="${c.labelX}" y="${(820 + b * SY + 7.6).toFixed(1)}"${r === 9 ? ` clip-path="url(#${c.id}-clip)"` : ''}>${r}</text>`;
  });
  for (let i = 0; i < c.ticks; i++) {
    out += `<path class="tick" d="M${X(c.tick0 + i * c.tickStep)} ${Y(1117)}V${Y(1151)}"/>`;
  }
  c.labels.forEach((t, i) => {
    out += `<text text-anchor="middle" x="${X(c.tick0 + (1 + 2 * i) * c.tickStep)}" y="1254">${t}</text>`;
  });
  document.getElementById(c.id).innerHTML = out;
}

draw(bias);
draw(kernel);
```
